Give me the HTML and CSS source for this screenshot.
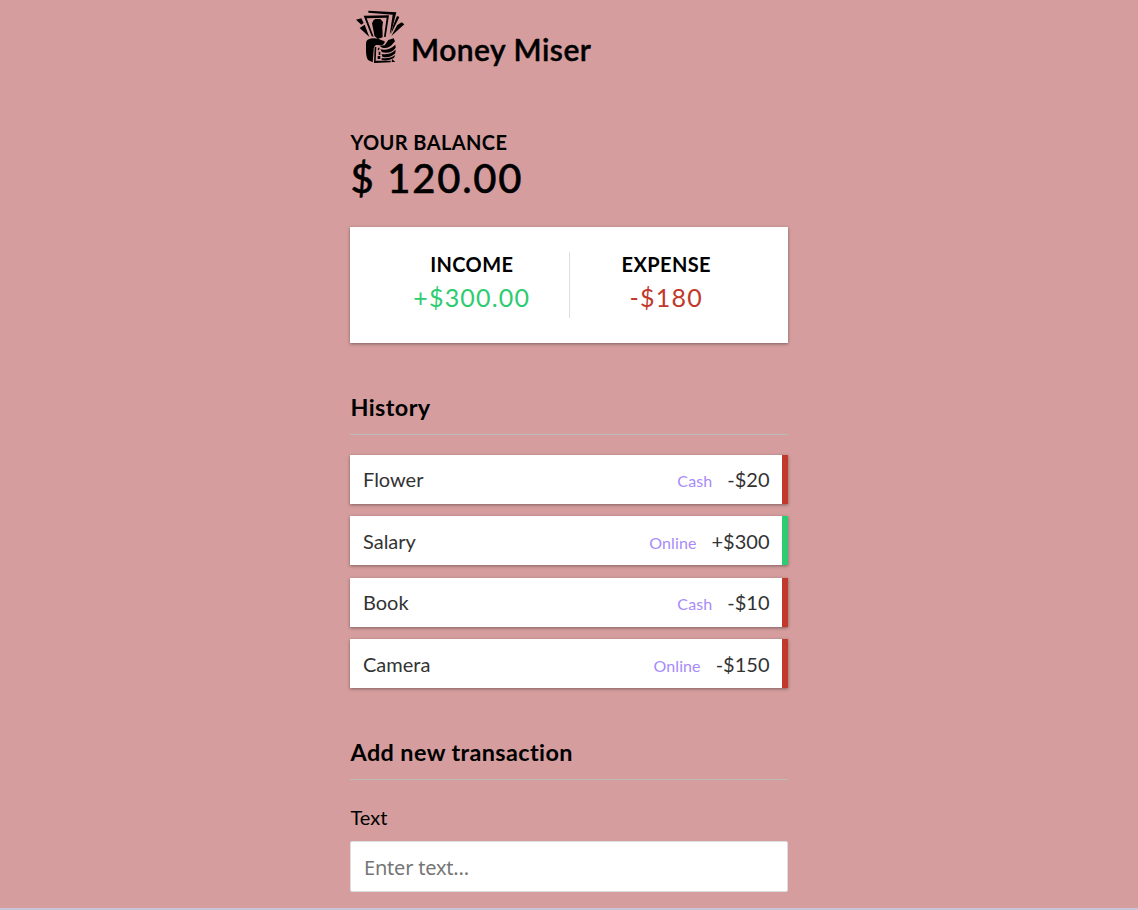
FILE: index.html
```html
<!DOCTYPE html>
<html lang="en">
<head>
<meta charset="utf-8">
<title>Money Miser</title>
<link rel="stylesheet" href="styles.css">
</head>
<body>
<main class="container">
  <header class="brand">
    <svg class="logo" viewBox="30 30 150 162" aria-hidden="true">
      <path d="M70 32L154 37L141 88L134 104L143 44L70 38Z"/>
      <path d="M33 59L49 55L56 69L49 74ZM44 84L59 74L73 111Z"/>
      <path d="M56 47L132 46L122 111L117 110L125 53L65 55L86 110L80 109Z"/>
      <path d="M86 60L92 57H106L114 66L112 80L113 112L98 117L88 107L84 85L81 70Z"/>
      <path d="M144 78L156 48L163 51L138 102ZM157 75L170 67L178 73L139 108Z"/>
      <path d="M68 119Q82 112 99 116L119 124Q120 132 110 136L94 135Q85 139 86 151L83 187L69 180Q63 172 63 150V131Q63 122 68 119Z"/>
      <path d="M103 137L119 136L130 120L146 115L150 124L138 137Q126 147 112 143ZM106 148Q132 153 151 134L152 143Q139 163 111 157ZM110 162Q134 166 152 149L151 160Q134 176 112 170ZM110 174Q133 178 151 165L147 174Q130 184 110 180Z"/>
      <path d="M89 141L94 141L92 182L137 182V187L87 189ZM99 143H104L102 151H98ZM101 155H106V165H101ZM98 168H106V177H98ZM141 177L151 186H140Z"/>
    </svg>
    <h1 class="title">Money Miser</h1>
  </header>

  <section class="balance">
    <h4 class="label">YOUR BALANCE</h4>
    <div class="total">$ 120.00</div>
  </section>

  <section class="summary">
    <div class="summary-cell">
      <h4 class="label">INCOME</h4>
      <p class="money income">+$300.00</p>
    </div>
    <div class="summary-cell">
      <h4 class="label">EXPENSE</h4>
      <p class="money expense">-$180</p>
    </div>
  </section>

  <h3 class="heading">History</h3>
  <ul class="list">
    <li class="item minus"><span class="name">Flower</span><span class="mode">Cash</span><span>-$20</span></li>
    <li class="item plus"><span class="name">Salary</span><span class="mode">Online</span><span>+$300</span></li>
    <li class="item minus"><span class="name">Book</span><span class="mode">Cash</span><span>-$10</span></li>
    <li class="item minus"><span class="name">Camera</span><span class="mode">Online</span><span>-$150</span></li>
  </ul>

  <h3 class="heading">Add new transaction</h3>
  <form class="form">
    <label class="field-label" for="text">Text</label>
    <input class="field" id="text" type="text" placeholder="Enter text...">
  </form>
</main>
<div class="bottom-edge"></div>
</body>
</html>
```

FILE: styles.css
```css
* {
  box-sizing: border-box;
}

body {
  margin: 0;
  height: 910px;
  overflow: hidden;
  display: flex;
  flex-direction: column;
  background: #d59d9d;
  color: #000;
  font-family: Lato, sans-serif;
  font-size: 20px;
}

h1, h3, h4, p, ul {
  margin: 0;
  padding: 0;
}

.container {
  width: 438px;
  height: 908px;
  flex: none;
  margin: 0 auto;
  padding-top: 10px;
}

.brand {
  display: flex;
  gap: 6px;
  height: 121px;
  padding-left: 5px;
}

.logo {
  width: 50px;
  height: 54px;
}

.title {
  padding-top: 21px;
  font-size: 30px;
  line-height: 36px;
  font-weight: 600;
  letter-spacing: 0.5px;
  -webkit-text-stroke: 0.4px #000;
}

.label {
  font-size: 20px;
  line-height: 24px;
  font-weight: 700;
  letter-spacing: 0.4px;
}

.balance {
  height: 96px;
}

.balance .label {
  padding-left: 0.5px;
  line-height: 22px;
}

.total {
  margin-top: 1px;
  padding-left: 0.5px;
  font-size: 40px;
  line-height: 48px;
  font-weight: 500;
  letter-spacing: 1.75px;
  -webkit-text-stroke: 0.5px #000;
}

.summary {
  display: flex;
  height: 116px;
  padding: 25px;
  background: #fff;
  box-shadow: 0 1px 3px rgba(0, 0, 0, 0.4);
}

.summary-cell {
  flex: 1;
  text-align: center;
}

.summary-cell:first-child {
  border-right: 1px solid #dedede;
}

.money {
  margin-top: 6px;
  font-size: 25px;
  line-height: 30px;
  letter-spacing: 1.2px;
}

.income {
  color: #2ecc71;
}

.expense {
  color: #c0392b;
}

.heading {
  margin: 50px 0 20px;
  padding: 0 0 12px 0.5px;
  border-bottom: 1px solid #bbb;
  font-size: 23.4px;
  line-height: 29px;
  font-weight: 700;
  letter-spacing: 0.4px;
}

.list {
  display: grid;
  gap: 12.4px;
  list-style: none;
}

.item {
  display: flex;
  align-items: baseline;
  height: 49px;
  padding: 12.4px 12.5px 12px 13px;
  border-right: 6px solid;
  background: #fff;
  color: #333;
  line-height: 24px;
  box-shadow: 0 1px 3px rgba(0, 0, 0, 0.4);
}

.item > span {
  color: #333;
}

.name {
  flex: 1;
}

.item > .mode {
  margin-right: 15px;
  color: #a78bfa;
  font-size: 16px;
  letter-spacing: 0.1px;
}

.minus {
  border-color: #c0392b;
}

.plus {
  border-color: #2ecc71;
}

.form {
  padding-top: 6px;
}

.field-label {
  display: block;
  margin-bottom: 12px;
  padding-left: 0.5px;
  line-height: 23px;
}

.field {
  display: block;
  width: 100%;
  height: 51px;
  padding: 13px 13px 11px;
  border: 1px solid #dedede;
  border-radius: 2px;
  font-family: "Noto Sans", sans-serif;
  font-size: 20px;
  letter-spacing: -0.2px;
}

.field::placeholder {
  color: #757575;
}

.bottom-edge {
  height: 2px;
  background: #c9c5d8;
}
```
